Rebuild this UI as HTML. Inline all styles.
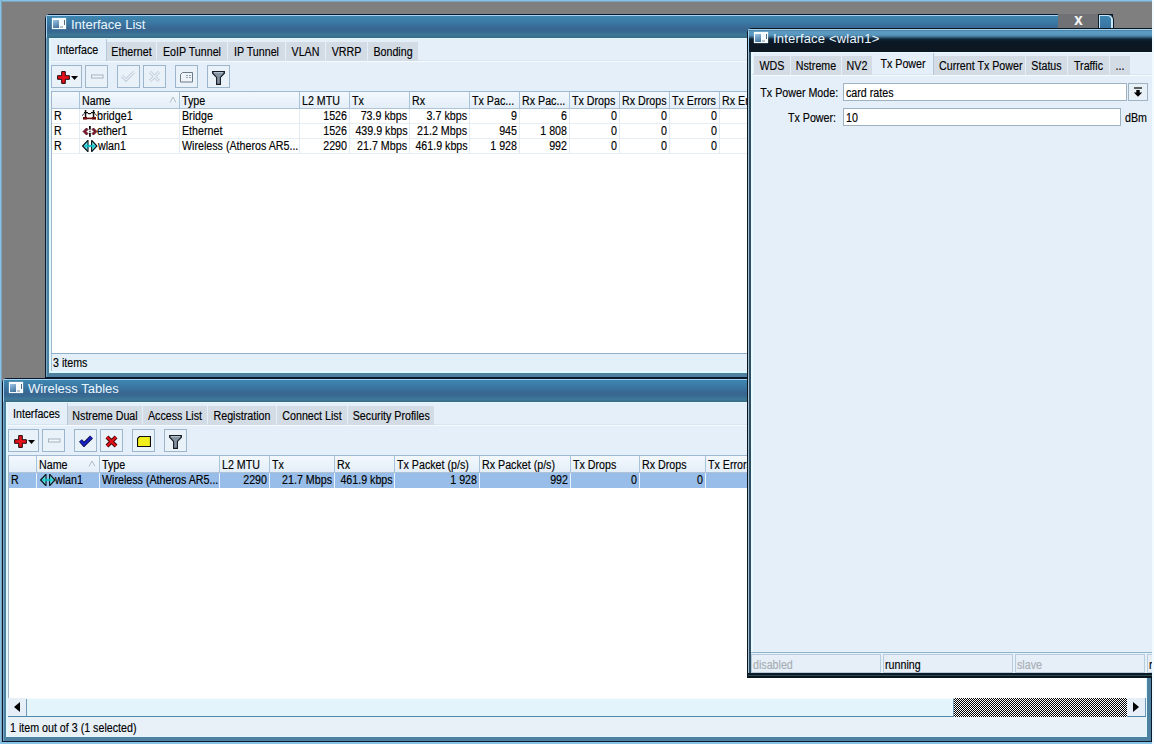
<!DOCTYPE html><html><head><meta charset="utf-8"><style>
*{box-sizing:border-box;margin:0;padding:0}
html,body{width:1154px;height:744px;overflow:hidden}
body{position:relative;background:#7f7f7f;font-family:"Liberation Sans",sans-serif;font-size:12px;color:#000}
.a{position:absolute;overflow:hidden}
.t{position:absolute;white-space:nowrap;line-height:14px;-webkit-text-stroke:0.15px currentColor}
svg{position:absolute;display:block}
</style></head><body><div class="a" style="left:0px;top:0px;width:1154px;height:2px;background:linear-gradient(#86c2e6 0,#86c2e6 1px,#7ea4bc 1px)"></div>
<div class="a" style="left:0px;top:0px;width:2px;height:744px;background:linear-gradient(90deg,#86c2e6 0,#86c2e6 1px,#7ea4bc 1px)"></div>
<div class="a" style="left:0px;top:742px;width:1154px;height:2px;background:#86c2e6"></div>
<div class="a" style="left:45px;top:14px;width:1068px;height:364px;background:#0a1a2c;border-top-left-radius:5px"></div>
<div class="a" style="left:46px;top:15px;width:1066px;height:362px;background:#4e80a0;border-top-left-radius:4px"></div>
<div class="a" style="left:46px;top:18px;width:1px;height:359px;background:#78a8c8"></div>
<div class="a" style="left:49px;top:38px;width:1059px;height:335px;background:#dff9ff"></div>
<div class="a" style="left:51px;top:39px;width:1055px;height:332px;background:#e5eff9"></div>
<div class="a" style="left:46px;top:15px;width:1066px;height:1px;background:#a6d4f2;border-top-left-radius:4px"></div>
<div class="a" style="left:46px;top:16px;width:1066px;height:22px;background:linear-gradient(#3d86b0 0px,#3c80aa 3px,#3a74a0 8px,#376690 13px,#386a92 16px,#3e7898 19px,#3d7494 20px,#3a6a80 22px);border-top-left-radius:3px"></div>
<div class="a" style="left:46px;top:16px;width:1px;height:22px;background:#a6d4f2;border-top-left-radius:3px"></div>
<div class="a" style="left:52px;top:18px;width:14px;height:11px;background:#f6fbff;box-shadow:0 0 1px #cfe0ea"></div>
<div class="a" style="left:53px;top:20px;width:6px;height:8px;background:linear-gradient(160deg,#9cc4e4,#3d6f9c)"></div>
<div class="a" style="left:64px;top:20px;width:1px;height:5px;background:#5a6c7c"></div>
<div class="a" style="left:60px;top:26px;width:3px;height:2px;background:#b8c4cc"></div>
<div class="t" style="left:71px;top:16px;text-align:left;font-size:13px;color:#eaf6ff;line-height:18px;-webkit-text-stroke:0;letter-spacing:0px">Interface List</div>
<div class="a" style="left:1058px;top:14px;width:40px;height:14px;background:#6f7174"></div>
<div class="t" style="left:1058px;top:11px;width:41px;text-align:center;transform:scaleX(0.89);transform-origin:50% 0;font-size:17px;font-weight:bold;color:#f4f4f4;line-height:18px">x</div>
<div class="a" style="left:1098px;top:14px;width:16px;height:14px;background:#0b1a26;border-top-right-radius:6px"></div>
<div class="a" style="left:1099px;top:15px;width:14px;height:13px;background:#c8e8fa;border-top-right-radius:5px"></div>
<div class="a" style="left:1100px;top:16px;width:11px;height:12px;background:linear-gradient(#3c86b0,#3a72a0);border-top-right-radius:4px"></div>
<div class="a" style="left:51px;top:60px;width:697px;height:1px;background:#d8e4ee"></div>
<div class="a" style="left:51px;top:61px;width:697px;height:1px;background:#f6fbff"></div>
<div class="a" style="left:106px;top:39px;width:1px;height:22px;background:#b4c8d8"></div>
<div class="t" style="left:49px;top:43px;width:57px;text-align:center;transform:scaleX(0.89);transform-origin:50% 0;">Interface</div>
<div class="a" style="left:107px;top:42px;width:49px;height:19px;background:#d3dbe4"></div>
<div class="t" style="left:107px;top:45px;width:49px;text-align:center;transform:scaleX(0.89);transform-origin:50% 0;">Ethernet</div>
<div class="a" style="left:157px;top:42px;width:70px;height:19px;background:#d3dbe4"></div>
<div class="t" style="left:157px;top:45px;width:70px;text-align:center;transform:scaleX(0.89);transform-origin:50% 0;">EoIP Tunnel</div>
<div class="a" style="left:228px;top:42px;width:57px;height:19px;background:#d3dbe4"></div>
<div class="t" style="left:228px;top:45px;width:57px;text-align:center;transform:scaleX(0.89);transform-origin:50% 0;">IP Tunnel</div>
<div class="a" style="left:286px;top:42px;width:39px;height:19px;background:#d3dbe4"></div>
<div class="t" style="left:286px;top:45px;width:39px;text-align:center;transform:scaleX(0.89);transform-origin:50% 0;">VLAN</div>
<div class="a" style="left:326px;top:42px;width:41px;height:19px;background:#d3dbe4"></div>
<div class="t" style="left:326px;top:45px;width:41px;text-align:center;transform:scaleX(0.89);transform-origin:50% 0;">VRRP</div>
<div class="a" style="left:368px;top:42px;width:50px;height:19px;background:#d3dbe4"></div>
<div class="t" style="left:368px;top:45px;width:50px;text-align:center;transform:scaleX(0.89);transform-origin:50% 0;">Bonding</div>
<div class="a" style="left:51px;top:65px;width:31px;height:23px;background:#e9f1f9;border:1px solid #9db6cc"></div>
<svg style="left:57px;top:71px" width="23" height="14" viewBox="0 0 23 14"><path d="M4.7 0.6h3.6v4.1h4.1v3.6h-4.1v4.1h-3.6v-4.1h-4.1v-3.6h4.1z" fill="#e8101a" stroke="#200808" stroke-width="1"/><path d="M14 5h7l-3.5 4z" fill="#000"/></svg>
<div class="a" style="left:85px;top:65px;width:23px;height:23px;background:#e9f1f9;border:1px solid #9db6cc"></div>
<svg style="left:91px;top:74px" width="13" height="5" viewBox="0 0 13 5"><rect x="0.5" y="1" width="11.5" height="3" fill="#f2f6fa" stroke="#a4b4c2" stroke-width="1"/></svg>
<div class="a" style="left:117px;top:65px;width:23px;height:23px;background:#e9f1f9;border:1px solid #9db6cc"></div>
<svg style="left:121px;top:70px" width="14" height="12" viewBox="0 0 14 12"><path d="M1 6l4 4l8-8" fill="none" stroke="#b8c8d6" stroke-width="3"/><path d="M1 6l4 4l8-8" fill="none" stroke="#eef4fa" stroke-width="1.2"/></svg>
<div class="a" style="left:143px;top:65px;width:23px;height:23px;background:#e9f1f9;border:1px solid #9db6cc"></div>
<svg style="left:148px;top:70px" width="13" height="13" viewBox="0 0 13 13"><path d="M2 2l9 9M11 2l-9 9" fill="none" stroke="#b8c8d6" stroke-width="3"/><path d="M2 2l9 9M11 2l-9 9" fill="none" stroke="#eef4fa" stroke-width="1.2"/></svg>
<div class="a" style="left:175px;top:65px;width:23px;height:23px;background:#e9f1f9;border:1px solid #9db6cc"></div>
<svg style="left:180px;top:72px" width="14" height="11" viewBox="0 0 14 11"><path d="M2.5 0.5h10v9.5h-12v-7.5z" fill="#eef4fa" stroke="#6c7a86" stroke-width="1"/><path d="M6 3.5h2M9 3.5h2M6 5.5h2M9 5.5h2" stroke="#98a4b0" stroke-width="1"/></svg>
<div class="a" style="left:207px;top:65px;width:23px;height:23px;background:#e9f1f9;border:1px solid #9db6cc"></div>
<svg style="left:212px;top:71px" width="13" height="14" viewBox="0 0 13 14"><path d="M0.6 0.6h11.8v1.6l-4 4.3v6.9h-3.8v-6.9l-4-4.3z" fill="#8492a2" stroke="#141a20" stroke-width="1.1" stroke-linejoin="miter"/><path d="M2 1.6h9" stroke="#c4d0dc" stroke-width="0.9"/></svg>
<div class="a" style="left:51px;top:91px;width:697px;height:263px;background:#ffffff"></div>
<div class="a" style="left:51px;top:91px;width:697px;height:1px;background:#9fbad0"></div>
<div class="a" style="left:51px;top:91px;width:1px;height:263px;background:#a4b6c6"></div>
<div class="a" style="left:52px;top:92px;width:696px;height:16px;background:linear-gradient(#f2f8fd,#e4eef8)"></div>
<div class="a" style="left:52px;top:108px;width:696px;height:1px;background:#aec4d6"></div>
<div class="a" style="left:79px;top:92px;width:1px;height:17px;background:#a9c4da"></div>
<div class="t" style="left:82px;top:94px;text-align:left;transform:scaleX(0.89);transform-origin:0 0;line-height:14px">Name</div>
<div class="a" style="left:179px;top:92px;width:1px;height:17px;background:#a9c4da"></div>
<div class="t" style="left:182px;top:94px;text-align:left;transform:scaleX(0.89);transform-origin:0 0;line-height:14px">Type</div>
<div class="a" style="left:299px;top:92px;width:1px;height:17px;background:#a9c4da"></div>
<div class="t" style="left:302px;top:94px;text-align:left;transform:scaleX(0.89);transform-origin:0 0;line-height:14px">L2 MTU</div>
<div class="a" style="left:349px;top:92px;width:1px;height:17px;background:#a9c4da"></div>
<div class="t" style="left:352px;top:94px;text-align:left;transform:scaleX(0.89);transform-origin:0 0;line-height:14px">Tx</div>
<div class="a" style="left:409px;top:92px;width:1px;height:17px;background:#a9c4da"></div>
<div class="t" style="left:412px;top:94px;text-align:left;transform:scaleX(0.89);transform-origin:0 0;line-height:14px">Rx</div>
<div class="a" style="left:469px;top:92px;width:1px;height:17px;background:#a9c4da"></div>
<div class="t" style="left:472px;top:94px;text-align:left;transform:scaleX(0.89);transform-origin:0 0;line-height:14px">Tx Pac...</div>
<div class="a" style="left:519px;top:92px;width:1px;height:17px;background:#a9c4da"></div>
<div class="t" style="left:522px;top:94px;text-align:left;transform:scaleX(0.89);transform-origin:0 0;line-height:14px">Rx Pac...</div>
<div class="a" style="left:569px;top:92px;width:1px;height:17px;background:#a9c4da"></div>
<div class="t" style="left:572px;top:94px;text-align:left;transform:scaleX(0.89);transform-origin:0 0;line-height:14px">Tx Drops</div>
<div class="a" style="left:619px;top:92px;width:1px;height:17px;background:#a9c4da"></div>
<div class="t" style="left:622px;top:94px;text-align:left;transform:scaleX(0.89);transform-origin:0 0;line-height:14px">Rx Drops</div>
<div class="a" style="left:669px;top:92px;width:1px;height:17px;background:#a9c4da"></div>
<div class="t" style="left:672px;top:94px;text-align:left;transform:scaleX(0.89);transform-origin:0 0;line-height:14px">Tx Errors</div>
<div class="a" style="left:719px;top:92px;width:1px;height:17px;background:#a9c4da"></div>
<div class="t" style="left:722px;top:94px;text-align:left;transform:scaleX(0.89);transform-origin:0 0;line-height:14px">Rx Errors</div>
<div class="a" style="left:52px;top:123px;width:696px;height:1px;background:#e6edf3"></div>
<div class="t" style="left:54px;top:109px;text-align:left;transform:scaleX(0.89);transform-origin:0 0;line-height:14px">R</div>
<div class="a" style="left:79px;top:109px;width:1px;height:15px;background:#e2eaf2"></div>
<div class="a" style="left:179px;top:109px;width:1px;height:15px;background:#e2eaf2"></div>
<div class="t" style="left:182px;top:109px;text-align:left;transform:scaleX(0.89);transform-origin:0 0;line-height:14px">Bridge</div>
<div class="a" style="left:299px;top:109px;width:1px;height:15px;background:#e2eaf2"></div>
<div class="t" style="left:299px;top:109px;width:48px;text-align:right;transform:scaleX(0.89);transform-origin:100% 0;line-height:14px">1526</div>
<div class="a" style="left:349px;top:109px;width:1px;height:15px;background:#e2eaf2"></div>
<div class="t" style="left:349px;top:109px;width:58px;text-align:right;transform:scaleX(0.89);transform-origin:100% 0;line-height:14px">73.9 kbps</div>
<div class="a" style="left:409px;top:109px;width:1px;height:15px;background:#e2eaf2"></div>
<div class="t" style="left:409px;top:109px;width:58px;text-align:right;transform:scaleX(0.89);transform-origin:100% 0;line-height:14px">3.7 kbps</div>
<div class="a" style="left:469px;top:109px;width:1px;height:15px;background:#e2eaf2"></div>
<div class="t" style="left:469px;top:109px;width:48px;text-align:right;transform:scaleX(0.89);transform-origin:100% 0;line-height:14px">9</div>
<div class="a" style="left:519px;top:109px;width:1px;height:15px;background:#e2eaf2"></div>
<div class="t" style="left:519px;top:109px;width:48px;text-align:right;transform:scaleX(0.89);transform-origin:100% 0;line-height:14px">6</div>
<div class="a" style="left:569px;top:109px;width:1px;height:15px;background:#e2eaf2"></div>
<div class="t" style="left:569px;top:109px;width:48px;text-align:right;transform:scaleX(0.89);transform-origin:100% 0;line-height:14px">0</div>
<div class="a" style="left:619px;top:109px;width:1px;height:15px;background:#e2eaf2"></div>
<div class="t" style="left:619px;top:109px;width:48px;text-align:right;transform:scaleX(0.89);transform-origin:100% 0;line-height:14px">0</div>
<div class="a" style="left:669px;top:109px;width:1px;height:15px;background:#e2eaf2"></div>
<div class="t" style="left:669px;top:109px;width:48px;text-align:right;transform:scaleX(0.89);transform-origin:100% 0;line-height:14px">0</div>
<div class="a" style="left:719px;top:109px;width:1px;height:15px;background:#e2eaf2"></div>
<div class="a" style="left:52px;top:138px;width:696px;height:1px;background:#e6edf3"></div>
<div class="t" style="left:54px;top:124px;text-align:left;transform:scaleX(0.89);transform-origin:0 0;line-height:14px">R</div>
<div class="a" style="left:79px;top:124px;width:1px;height:15px;background:#e2eaf2"></div>
<div class="a" style="left:179px;top:124px;width:1px;height:15px;background:#e2eaf2"></div>
<div class="t" style="left:182px;top:124px;text-align:left;transform:scaleX(0.89);transform-origin:0 0;line-height:14px">Ethernet</div>
<div class="a" style="left:299px;top:124px;width:1px;height:15px;background:#e2eaf2"></div>
<div class="t" style="left:299px;top:124px;width:48px;text-align:right;transform:scaleX(0.89);transform-origin:100% 0;line-height:14px">1526</div>
<div class="a" style="left:349px;top:124px;width:1px;height:15px;background:#e2eaf2"></div>
<div class="t" style="left:349px;top:124px;width:58px;text-align:right;transform:scaleX(0.89);transform-origin:100% 0;line-height:14px">439.9 kbps</div>
<div class="a" style="left:409px;top:124px;width:1px;height:15px;background:#e2eaf2"></div>
<div class="t" style="left:409px;top:124px;width:58px;text-align:right;transform:scaleX(0.89);transform-origin:100% 0;line-height:14px">21.2 Mbps</div>
<div class="a" style="left:469px;top:124px;width:1px;height:15px;background:#e2eaf2"></div>
<div class="t" style="left:469px;top:124px;width:48px;text-align:right;transform:scaleX(0.89);transform-origin:100% 0;line-height:14px">945</div>
<div class="a" style="left:519px;top:124px;width:1px;height:15px;background:#e2eaf2"></div>
<div class="t" style="left:519px;top:124px;width:48px;text-align:right;transform:scaleX(0.89);transform-origin:100% 0;line-height:14px">1 808</div>
<div class="a" style="left:569px;top:124px;width:1px;height:15px;background:#e2eaf2"></div>
<div class="t" style="left:569px;top:124px;width:48px;text-align:right;transform:scaleX(0.89);transform-origin:100% 0;line-height:14px">0</div>
<div class="a" style="left:619px;top:124px;width:1px;height:15px;background:#e2eaf2"></div>
<div class="t" style="left:619px;top:124px;width:48px;text-align:right;transform:scaleX(0.89);transform-origin:100% 0;line-height:14px">0</div>
<div class="a" style="left:669px;top:124px;width:1px;height:15px;background:#e2eaf2"></div>
<div class="t" style="left:669px;top:124px;width:48px;text-align:right;transform:scaleX(0.89);transform-origin:100% 0;line-height:14px">0</div>
<div class="a" style="left:719px;top:124px;width:1px;height:15px;background:#e2eaf2"></div>
<div class="a" style="left:52px;top:153px;width:696px;height:1px;background:#e6edf3"></div>
<div class="t" style="left:54px;top:139px;text-align:left;transform:scaleX(0.89);transform-origin:0 0;line-height:14px">R</div>
<div class="a" style="left:79px;top:139px;width:1px;height:15px;background:#e2eaf2"></div>
<div class="a" style="left:179px;top:139px;width:1px;height:15px;background:#e2eaf2"></div>
<div class="t" style="left:182px;top:139px;text-align:left;transform:scaleX(0.89);transform-origin:0 0;line-height:14px">Wireless (Atheros AR5...</div>
<div class="a" style="left:299px;top:139px;width:1px;height:15px;background:#e2eaf2"></div>
<div class="t" style="left:299px;top:139px;width:48px;text-align:right;transform:scaleX(0.89);transform-origin:100% 0;line-height:14px">2290</div>
<div class="a" style="left:349px;top:139px;width:1px;height:15px;background:#e2eaf2"></div>
<div class="t" style="left:349px;top:139px;width:58px;text-align:right;transform:scaleX(0.89);transform-origin:100% 0;line-height:14px">21.7 Mbps</div>
<div class="a" style="left:409px;top:139px;width:1px;height:15px;background:#e2eaf2"></div>
<div class="t" style="left:409px;top:139px;width:58px;text-align:right;transform:scaleX(0.89);transform-origin:100% 0;line-height:14px">461.9 kbps</div>
<div class="a" style="left:469px;top:139px;width:1px;height:15px;background:#e2eaf2"></div>
<div class="t" style="left:469px;top:139px;width:48px;text-align:right;transform:scaleX(0.89);transform-origin:100% 0;line-height:14px">1 928</div>
<div class="a" style="left:519px;top:139px;width:1px;height:15px;background:#e2eaf2"></div>
<div class="t" style="left:519px;top:139px;width:48px;text-align:right;transform:scaleX(0.89);transform-origin:100% 0;line-height:14px">992</div>
<div class="a" style="left:569px;top:139px;width:1px;height:15px;background:#e2eaf2"></div>
<div class="t" style="left:569px;top:139px;width:48px;text-align:right;transform:scaleX(0.89);transform-origin:100% 0;line-height:14px">0</div>
<div class="a" style="left:619px;top:139px;width:1px;height:15px;background:#e2eaf2"></div>
<div class="t" style="left:619px;top:139px;width:48px;text-align:right;transform:scaleX(0.89);transform-origin:100% 0;line-height:14px">0</div>
<div class="a" style="left:669px;top:139px;width:1px;height:15px;background:#e2eaf2"></div>
<div class="t" style="left:669px;top:139px;width:48px;text-align:right;transform:scaleX(0.89);transform-origin:100% 0;line-height:14px">0</div>
<div class="a" style="left:719px;top:139px;width:1px;height:15px;background:#e2eaf2"></div>
<svg style="left:169px;top:96px" width="7" height="7" viewBox="0 0 7 7"><path d="M1 6.5l3-5.5l3 5.5" fill="none" stroke="#b0bcc6" stroke-width="1"/></svg>
<svg style="left:82px;top:110px" width="15" height="10" viewBox="0 0 15 10"><rect x="2.8" y="0" width="1.5" height="8" fill="#111"/><rect x="10.8" y="0" width="1.5" height="8" fill="#111"/><rect x="2" y="2" width="4" height="1.3" fill="#111"/><rect x="9" y="2" width="4" height="1.3" fill="#111"/><rect x="6" y="3" width="3" height="1.2" fill="#111"/><path d="M2 3.5L0.2 5.8M13 3.5L14.8 5.8" stroke="#111" stroke-width="0.9" fill="none"/><rect x="1" y="7.6" width="13" height="1.6" fill="#6c1010"/><rect x="1" y="7" width="4" height="2.5" fill="#6c1010"/><rect x="10" y="7" width="4" height="2.5" fill="#6c1010"/></svg>
<svg style="left:82px;top:125px" width="16" height="13" viewBox="0 0 16 13"><path d="M1 6.5L4.5 3L6 4.5L4 6.5L6 8.5L4.5 10z" fill="#8a1830" stroke="#3a0a14" stroke-width="0.8"/><path d="M15 6.5L11.5 3L10 4.5L12 6.5L10 8.5L11.5 10z" fill="#8a1830" stroke="#3a0a14" stroke-width="0.8"/><rect x="7" y="1" width="1.8" height="3.6" fill="#111"/><rect x="7" y="5.8" width="1.8" height="0.9" fill="#111"/><rect x="7" y="7.8" width="1.8" height="4" fill="#111"/></svg>
<svg style="left:82px;top:140px" width="16" height="12" viewBox="0 0 16 12"><path d="M6 0.5L0.8 6L6 11.5zM9.6 0.5L14.8 6L9.6 11.5z" fill="#5ee6ea"/><path d="M5.5 4.8H10V7.2H5.5z" fill="#30d8dc"/><path d="M6 0.3L0.7 6L6 11.7M9.6 0.3L14.9 6L9.6 11.7" fill="none" stroke="#0a1418" stroke-width="1.2"/><path d="M6 0.3V11.7M9.6 0.3V11.7" stroke="#0a1418" stroke-width="1.1"/><path d="M3 6H12.6" stroke="#14c4cc" stroke-width="1.6"/></svg>
<div class="t" style="left:97px;top:109px;text-align:left;transform:scaleX(0.89);transform-origin:0 0;">bridge1</div>
<div class="t" style="left:97px;top:124px;text-align:left;transform:scaleX(0.89);transform-origin:0 0;">ether1</div>
<div class="t" style="left:98px;top:139px;text-align:left;transform:scaleX(0.89);transform-origin:0 0;">wlan1</div>
<div class="a" style="left:51px;top:353px;width:697px;height:1px;background:#8fb0c8"></div>
<div class="a" style="left:51px;top:354px;width:697px;height:17px;background:#e4f0f9;border-left:1px solid #a8c0d4"></div>
<div class="t" style="left:53px;top:356px;text-align:left;transform:scaleX(0.89);transform-origin:0 0;">3 items</div>
<div class="a" style="left:2px;top:378px;width:1150px;height:364px;background:#0a1a2c;border-top-left-radius:5px"></div>
<div class="a" style="left:3px;top:379px;width:1148px;height:362px;background:#4e80a0;border-top-left-radius:4px"></div>
<div class="a" style="left:3px;top:382px;width:1px;height:359px;background:#78a8c8"></div>
<div class="a" style="left:6px;top:402px;width:1141px;height:335px;background:#dff9ff"></div>
<div class="a" style="left:8px;top:403px;width:1137px;height:332px;background:#e5eff9"></div>
<div class="a" style="left:3px;top:379px;width:1148px;height:1px;background:#a6d4f2;border-top-left-radius:4px"></div>
<div class="a" style="left:3px;top:380px;width:1148px;height:22px;background:linear-gradient(#3d86b0 0px,#3c80aa 3px,#3a74a0 8px,#376690 13px,#386a92 16px,#3e7898 19px,#3d7494 20px,#3a6a80 22px);border-top-left-radius:3px"></div>
<div class="a" style="left:3px;top:380px;width:1px;height:22px;background:#a6d4f2;border-top-left-radius:3px"></div>
<div class="a" style="left:9px;top:382px;width:14px;height:11px;background:#f6fbff;box-shadow:0 0 1px #cfe0ea"></div>
<div class="a" style="left:10px;top:384px;width:6px;height:8px;background:linear-gradient(160deg,#9cc4e4,#3d6f9c)"></div>
<div class="a" style="left:21px;top:384px;width:1px;height:5px;background:#5a6c7c"></div>
<div class="a" style="left:17px;top:390px;width:3px;height:2px;background:#b8c4cc"></div>
<div class="t" style="left:28px;top:380px;text-align:left;font-size:13px;color:#eaf6ff;line-height:18px;-webkit-text-stroke:0;letter-spacing:0px">Wireless Tables</div>
<div class="a" style="left:8px;top:424px;width:1138px;height:1px;background:#d8e4ee"></div>
<div class="a" style="left:8px;top:425px;width:1138px;height:1px;background:#f6fbff"></div>
<div class="a" style="left:67px;top:403px;width:1px;height:22px;background:#b4c8d8"></div>
<div class="t" style="left:6px;top:407px;width:61px;text-align:center;transform:scaleX(0.89);transform-origin:50% 0;">Interfaces</div>
<div class="a" style="left:68px;top:406px;width:74px;height:19px;background:#d3dbe4"></div>
<div class="t" style="left:68px;top:409px;width:74px;text-align:center;transform:scaleX(0.89);transform-origin:50% 0;">Nstreme Dual</div>
<div class="a" style="left:143px;top:406px;width:64px;height:19px;background:#d3dbe4"></div>
<div class="t" style="left:143px;top:409px;width:64px;text-align:center;transform:scaleX(0.89);transform-origin:50% 0;">Access List</div>
<div class="a" style="left:208px;top:406px;width:68px;height:19px;background:#d3dbe4"></div>
<div class="t" style="left:208px;top:409px;width:68px;text-align:center;transform:scaleX(0.89);transform-origin:50% 0;">Registration</div>
<div class="a" style="left:277px;top:406px;width:70px;height:19px;background:#d3dbe4"></div>
<div class="t" style="left:277px;top:409px;width:70px;text-align:center;transform:scaleX(0.89);transform-origin:50% 0;">Connect List</div>
<div class="a" style="left:348px;top:406px;width:86px;height:19px;background:#d3dbe4"></div>
<div class="t" style="left:348px;top:409px;width:86px;text-align:center;transform:scaleX(0.89);transform-origin:50% 0;">Security Profiles</div>
<div class="a" style="left:8px;top:429px;width:31px;height:23px;background:#e9f1f9;border:1px solid #9db6cc"></div>
<svg style="left:14px;top:435px" width="23" height="14" viewBox="0 0 23 14"><path d="M4.7 0.6h3.6v4.1h4.1v3.6h-4.1v4.1h-3.6v-4.1h-4.1v-3.6h4.1z" fill="#e8101a" stroke="#200808" stroke-width="1"/><path d="M14 5h7l-3.5 4z" fill="#000"/></svg>
<div class="a" style="left:42px;top:429px;width:23px;height:23px;background:#e9f1f9;border:1px solid #9db6cc"></div>
<svg style="left:48px;top:438px" width="13" height="5" viewBox="0 0 13 5"><rect x="0.5" y="1" width="11.5" height="3" fill="#f2f6fa" stroke="#a4b4c2" stroke-width="1"/></svg>
<div class="a" style="left:74px;top:429px;width:23px;height:23px;background:#e9f1f9;border:1px solid #9db6cc"></div>
<svg style="left:79px;top:435px" width="14" height="12" viewBox="0 0 14 12"><path d="M1.5 5.5l3.5 4l7.5-7.5" fill="none" stroke="#0a0a40" stroke-width="4"/><path d="M1.5 5.5l3.5 4l7.5-7.5" fill="none" stroke="#1822c8" stroke-width="2.4"/></svg>
<div class="a" style="left:100px;top:429px;width:23px;height:23px;background:#e9f1f9;border:1px solid #9db6cc"></div>
<svg style="left:105px;top:435px" width="13" height="13" viewBox="0 0 13 13"><path d="M2 2l9 9M11 2l-9 9" fill="none" stroke="#400808" stroke-width="4"/><path d="M2 2l9 9M11 2l-9 9" fill="none" stroke="#e01018" stroke-width="2.4"/></svg>
<div class="a" style="left:132px;top:429px;width:23px;height:23px;background:#e9f1f9;border:1px solid #9db6cc"></div>
<svg style="left:137px;top:436px" width="14" height="11" viewBox="0 0 14 11"><path d="M2.5 0.5h11v10h-13v-8z" fill="#f2ee1a" stroke="#101010" stroke-width="1.2"/></svg>
<div class="a" style="left:164px;top:429px;width:23px;height:23px;background:#e9f1f9;border:1px solid #9db6cc"></div>
<svg style="left:169px;top:435px" width="13" height="14" viewBox="0 0 13 14"><path d="M0.6 0.6h11.8v1.6l-4 4.3v6.9h-3.8v-6.9l-4-4.3z" fill="#8492a2" stroke="#141a20" stroke-width="1.1" stroke-linejoin="miter"/><path d="M2 1.6h9" stroke="#c4d0dc" stroke-width="0.9"/></svg>
<div class="a" style="left:8px;top:455px;width:1138px;height:243px;background:#ffffff"></div>
<div class="a" style="left:8px;top:455px;width:1138px;height:1px;background:#9fbad0"></div>
<div class="a" style="left:8px;top:455px;width:1px;height:243px;background:#a4b6c6"></div>
<div class="a" style="left:9px;top:456px;width:1137px;height:16px;background:linear-gradient(#f2f8fd,#e4eef8)"></div>
<div class="a" style="left:9px;top:472px;width:1137px;height:1px;background:#aec4d6"></div>
<div class="a" style="left:36px;top:456px;width:1px;height:17px;background:#a9c4da"></div>
<div class="t" style="left:39px;top:458px;text-align:left;transform:scaleX(0.89);transform-origin:0 0;line-height:14px">Name</div>
<div class="a" style="left:99px;top:456px;width:1px;height:17px;background:#a9c4da"></div>
<div class="t" style="left:102px;top:458px;text-align:left;transform:scaleX(0.89);transform-origin:0 0;line-height:14px">Type</div>
<div class="a" style="left:219px;top:456px;width:1px;height:17px;background:#a9c4da"></div>
<div class="t" style="left:222px;top:458px;text-align:left;transform:scaleX(0.89);transform-origin:0 0;line-height:14px">L2 MTU</div>
<div class="a" style="left:269px;top:456px;width:1px;height:17px;background:#a9c4da"></div>
<div class="t" style="left:272px;top:458px;text-align:left;transform:scaleX(0.89);transform-origin:0 0;line-height:14px">Tx</div>
<div class="a" style="left:334px;top:456px;width:1px;height:17px;background:#a9c4da"></div>
<div class="t" style="left:337px;top:458px;text-align:left;transform:scaleX(0.89);transform-origin:0 0;line-height:14px">Rx</div>
<div class="a" style="left:394px;top:456px;width:1px;height:17px;background:#a9c4da"></div>
<div class="t" style="left:397px;top:458px;text-align:left;transform:scaleX(0.89);transform-origin:0 0;line-height:14px">Tx Packet (p/s)</div>
<div class="a" style="left:479px;top:456px;width:1px;height:17px;background:#a9c4da"></div>
<div class="t" style="left:482px;top:458px;text-align:left;transform:scaleX(0.89);transform-origin:0 0;line-height:14px">Rx Packet (p/s)</div>
<div class="a" style="left:570px;top:456px;width:1px;height:17px;background:#a9c4da"></div>
<div class="t" style="left:573px;top:458px;text-align:left;transform:scaleX(0.89);transform-origin:0 0;line-height:14px">Tx Drops</div>
<div class="a" style="left:639px;top:456px;width:1px;height:17px;background:#a9c4da"></div>
<div class="t" style="left:642px;top:458px;text-align:left;transform:scaleX(0.89);transform-origin:0 0;line-height:14px">Rx Drops</div>
<div class="a" style="left:705px;top:456px;width:1px;height:17px;background:#a9c4da"></div>
<div class="t" style="left:708px;top:458px;text-align:left;transform:scaleX(0.89);transform-origin:0 0;line-height:14px">Tx Errors</div>
<div class="a" style="left:770px;top:456px;width:1px;height:17px;background:#a9c4da"></div>
<div class="t" style="left:773px;top:458px;text-align:left;transform:scaleX(0.89);transform-origin:0 0;line-height:14px">Rx Errors</div>
<div class="a" style="left:840px;top:456px;width:1px;height:17px;background:#a9c4da"></div>
<div class="a" style="left:9px;top:473px;width:1137px;height:15px;background:#97bde8"></div>
<div class="t" style="left:11px;top:473px;text-align:left;transform:scaleX(0.89);transform-origin:0 0;line-height:14px">R</div>
<div class="a" style="left:36px;top:473px;width:1px;height:15px;background:#e8f2fc"></div>
<div class="a" style="left:99px;top:473px;width:1px;height:15px;background:#e8f2fc"></div>
<div class="t" style="left:102px;top:473px;text-align:left;transform:scaleX(0.89);transform-origin:0 0;line-height:14px">Wireless (Atheros AR5...</div>
<div class="a" style="left:219px;top:473px;width:1px;height:15px;background:#e8f2fc"></div>
<div class="t" style="left:219px;top:473px;width:48px;text-align:right;transform:scaleX(0.89);transform-origin:100% 0;line-height:14px">2290</div>
<div class="a" style="left:269px;top:473px;width:1px;height:15px;background:#e8f2fc"></div>
<div class="t" style="left:269px;top:473px;width:63px;text-align:right;transform:scaleX(0.89);transform-origin:100% 0;line-height:14px">21.7 Mbps</div>
<div class="a" style="left:334px;top:473px;width:1px;height:15px;background:#e8f2fc"></div>
<div class="t" style="left:334px;top:473px;width:58px;text-align:right;transform:scaleX(0.89);transform-origin:100% 0;line-height:14px">461.9 kbps</div>
<div class="a" style="left:394px;top:473px;width:1px;height:15px;background:#e8f2fc"></div>
<div class="t" style="left:394px;top:473px;width:83px;text-align:right;transform:scaleX(0.89);transform-origin:100% 0;line-height:14px">1 928</div>
<div class="a" style="left:479px;top:473px;width:1px;height:15px;background:#e8f2fc"></div>
<div class="t" style="left:479px;top:473px;width:89px;text-align:right;transform:scaleX(0.89);transform-origin:100% 0;line-height:14px">992</div>
<div class="a" style="left:570px;top:473px;width:1px;height:15px;background:#e8f2fc"></div>
<div class="t" style="left:570px;top:473px;width:67px;text-align:right;transform:scaleX(0.89);transform-origin:100% 0;line-height:14px">0</div>
<div class="a" style="left:639px;top:473px;width:1px;height:15px;background:#e8f2fc"></div>
<div class="t" style="left:639px;top:473px;width:64px;text-align:right;transform:scaleX(0.89);transform-origin:100% 0;line-height:14px">0</div>
<div class="a" style="left:705px;top:473px;width:1px;height:15px;background:#e8f2fc"></div>
<div class="t" style="left:705px;top:473px;width:63px;text-align:right;transform:scaleX(0.89);transform-origin:100% 0;line-height:14px">0</div>
<div class="a" style="left:770px;top:473px;width:1px;height:15px;background:#e8f2fc"></div>
<div class="t" style="left:770px;top:473px;width:68px;text-align:right;transform:scaleX(0.89);transform-origin:100% 0;line-height:14px">0</div>
<div class="a" style="left:840px;top:473px;width:1px;height:15px;background:#e8f2fc"></div>
<svg style="left:88px;top:460px" width="7" height="7" viewBox="0 0 7 7"><path d="M1 6.5l3-5.5l3 5.5" fill="none" stroke="#b0bcc6" stroke-width="1"/></svg>
<svg style="left:40px;top:474px" width="16" height="12" viewBox="0 0 16 12"><path d="M6 0.5L0.8 6L6 11.5zM9.6 0.5L14.8 6L9.6 11.5z" fill="#5ee6ea"/><path d="M5.5 4.8H10V7.2H5.5z" fill="#30d8dc"/><path d="M6 0.3L0.7 6L6 11.7M9.6 0.3L14.9 6L9.6 11.7" fill="none" stroke="#0a1418" stroke-width="1.2"/><path d="M6 0.3V11.7M9.6 0.3V11.7" stroke="#0a1418" stroke-width="1.1"/><path d="M3 6H12.6" stroke="#14c4cc" stroke-width="1.6"/></svg>
<div class="t" style="left:55px;top:473px;text-align:left;transform:scaleX(0.89);transform-origin:0 0;">wlan1</div>
<div class="a" style="left:8px;top:698px;width:1138px;height:19px;background:#e6eef7"></div>
<div class="a" style="left:8px;top:716px;width:1138px;height:1px;background:#4f88aa"></div>
<div class="a" style="left:8px;top:698px;width:19px;height:18px;background:#e6eef7"></div>
<div class="a" style="left:26px;top:699px;width:1px;height:17px;background:#6f98b8"></div>
<svg style="left:13px;top:701px" width="8" height="12" viewBox="0 0 8 12"><path d="M7 1v10l-6-5z" fill="#000"/></svg>
<div class="a" style="left:954px;top:698px;width:173px;height:19px;background-color:#808080;background-image:repeating-conic-gradient(#000 0 25%,#fff 0 50%);background-size:2px 2px"></div>
<div class="a" style="left:27px;top:698px;width:927px;height:18px;background:#e4f4fb;border-top:1px solid #f4fcff;border-right:1px solid #6f9ab8"></div>
<div class="a" style="left:1127px;top:698px;width:19px;height:18px;background:#e6eef7;border-right:1px solid #6f98b8"></div>
<svg style="left:1132px;top:701px" width="8" height="12" viewBox="0 0 8 12"><path d="M1 1v10l6-5z" fill="#000"/></svg>
<div class="a" style="left:8px;top:717px;width:1138px;height:19px;background:#e8f0f8"></div>
<div class="t" style="left:10px;top:721px;text-align:left;transform:scaleX(0.89);transform-origin:0 0;">1 item out of 3 (1 selected)</div>
<div class="a" style="left:747px;top:28px;width:413px;height:650px;background:#0a161e;border-top-left-radius:5px"></div>
<div class="a" style="left:748px;top:29px;width:411px;height:648px;background:#2e4e64;border-top-left-radius:4px"></div>
<div class="a" style="left:748px;top:32px;width:1px;height:645px;background:#a8c0d4"></div>
<div class="a" style="left:748px;top:673px;width:411px;height:4px;background:linear-gradient(#0c1a24 0,#0c1a24 2px,#2a4a58 2px,#2a4a58 3px,#0a141c 3px)"></div>
<div class="a" style="left:751px;top:52px;width:404px;height:621px;background:#e8fcff"></div>
<div class="a" style="left:753px;top:53px;width:400px;height:618px;background:#e5eff9"></div>
<div class="a" style="left:748px;top:29px;width:411px;height:1px;background:#a6d4f2;border-top-left-radius:4px"></div>
<div class="a" style="left:748px;top:30px;width:411px;height:22px;background:linear-gradient(#3e6e8e 0px,#5a9bc2 1px,#5896bd 5px,#3d6a8a 7px,#0f2638 9px,#0c1824 12px,#0c1722 22px);border-top-left-radius:3px"></div>
<div class="a" style="left:748px;top:30px;width:1px;height:22px;background:#a6d4f2;border-top-left-radius:3px"></div>
<div class="a" style="left:754px;top:32px;width:14px;height:11px;background:#f6fbff;box-shadow:0 0 1px #cfe0ea"></div>
<div class="a" style="left:755px;top:34px;width:6px;height:8px;background:linear-gradient(160deg,#9cc4e4,#3d6f9c)"></div>
<div class="a" style="left:766px;top:34px;width:1px;height:5px;background:#5a6c7c"></div>
<div class="a" style="left:762px;top:40px;width:3px;height:2px;background:#b8c4cc"></div>
<div class="t" style="left:773px;top:30px;text-align:left;font-size:13px;color:#eaf6ff;line-height:18px;-webkit-text-stroke:0;letter-spacing:0.18px">Interface &lt;wlan1&gt;</div>
<div class="a" style="left:752px;top:74px;width:400px;height:1px;background:#d8e4ee"></div>
<div class="a" style="left:752px;top:75px;width:400px;height:1px;background:#f6fbff"></div>
<div class="a" style="left:754px;top:56px;width:36px;height:19px;background:#d3dbe4"></div>
<div class="t" style="left:754px;top:59px;width:36px;text-align:center;transform:scaleX(0.89);transform-origin:50% 0;">WDS</div>
<div class="a" style="left:791px;top:56px;width:50px;height:19px;background:#d3dbe4"></div>
<div class="t" style="left:791px;top:59px;width:50px;text-align:center;transform:scaleX(0.89);transform-origin:50% 0;">Nstreme</div>
<div class="a" style="left:842px;top:56px;width:30px;height:19px;background:#d3dbe4"></div>
<div class="t" style="left:842px;top:59px;width:30px;text-align:center;transform:scaleX(0.89);transform-origin:50% 0;">NV2</div>
<div class="a" style="left:933px;top:53px;width:1px;height:22px;background:#b4c8d8"></div>
<div class="t" style="left:873px;top:57px;width:60px;text-align:center;transform:scaleX(0.89);transform-origin:50% 0;">Tx Power</div>
<div class="a" style="left:934px;top:56px;width:91px;height:19px;background:#d3dbe4"></div>
<div class="t" style="left:934px;top:59px;width:91px;text-align:center;transform:scaleX(0.89);transform-origin:50% 0;">Current Tx Power</div>
<div class="a" style="left:1026px;top:56px;width:41px;height:19px;background:#d3dbe4"></div>
<div class="t" style="left:1026px;top:59px;width:41px;text-align:center;transform:scaleX(0.89);transform-origin:50% 0;">Status</div>
<div class="a" style="left:1068px;top:56px;width:41px;height:19px;background:#d3dbe4"></div>
<div class="t" style="left:1068px;top:59px;width:41px;text-align:center;transform:scaleX(0.89);transform-origin:50% 0;">Traffic</div>
<div class="a" style="left:1110px;top:56px;width:20px;height:19px;background:#d3dbe4"></div>
<div class="t" style="left:1110px;top:59px;width:20px;text-align:center;transform:scaleX(0.89);transform-origin:50% 0;">...</div>
<div class="t" style="left:751px;top:86px;width:85px;text-align:right;transform:scaleX(0.89);transform-origin:100% 0;">Tx Power Mode:</div>
<div class="a" style="left:843px;top:83px;width:284px;height:18px;background:#fff;border:1px solid #9fb2c2"></div>
<div class="t" style="left:846px;top:86px;text-align:left;transform:scaleX(0.89);transform-origin:0 0;">card rates</div>
<div class="a" style="left:1128px;top:83px;width:20px;height:18px;background:#e8f0f8;border:1px solid #9fb2c2"></div>
<svg style="left:1133px;top:87px" width="10" height="10" viewBox="0 0 10 10"><path d="M1 1h8" stroke="#000" stroke-width="1.2"/><path d="M3.3 3h3.4v2.6h2.5l-4.2 4.2l-4.2-4.2h2.5z" fill="#000"/></svg>
<div class="t" style="left:751px;top:111px;width:85px;text-align:right;transform:scaleX(0.89);transform-origin:100% 0;">Tx Power:</div>
<div class="a" style="left:843px;top:108px;width:278px;height:18px;background:#fff;border:1px solid #9fb2c2"></div>
<div class="t" style="left:846px;top:111px;text-align:left;transform:scaleX(0.89);transform-origin:0 0;">10</div>
<div class="t" style="left:1125px;top:111px;text-align:left;transform:scaleX(0.89);transform-origin:0 0;">dBm</div>
<div class="a" style="left:751px;top:652px;width:402px;height:1px;background:#8fb4cc"></div>
<div class="a" style="left:751px;top:653px;width:402px;height:20px;background:#e8f0f8"></div>
<div class="a" style="left:751px;top:654px;width:130px;height:19px;background:#e6eef7;border:1px solid #b6cde0"></div>
<div class="t" style="left:753px;top:658px;text-align:left;transform:scaleX(0.89);transform-origin:0 0;color:#a8aeb4">disabled</div>
<div class="a" style="left:883px;top:654px;width:130px;height:19px;background:#e6eef7;border:1px solid #b6cde0"></div>
<div class="t" style="left:885px;top:658px;text-align:left;transform:scaleX(0.89);transform-origin:0 0;">running</div>
<div class="a" style="left:1015px;top:654px;width:130px;height:19px;background:#e6eef7;border:1px solid #b6cde0"></div>
<div class="t" style="left:1017px;top:658px;text-align:left;transform:scaleX(0.89);transform-origin:0 0;color:#a8aeb4">slave</div>
<div class="a" style="left:1147px;top:654px;width:10px;height:19px;background:#e6eef7;border:1px solid #b6cde0"></div>
<div class="t" style="left:1149px;top:658px;text-align:left;transform:scaleX(0.89);transform-origin:0 0;">r</div>
<div class="a" style="left:1152px;top:0px;width:2px;height:744px;background:#f2fbff"></div></body></html>
